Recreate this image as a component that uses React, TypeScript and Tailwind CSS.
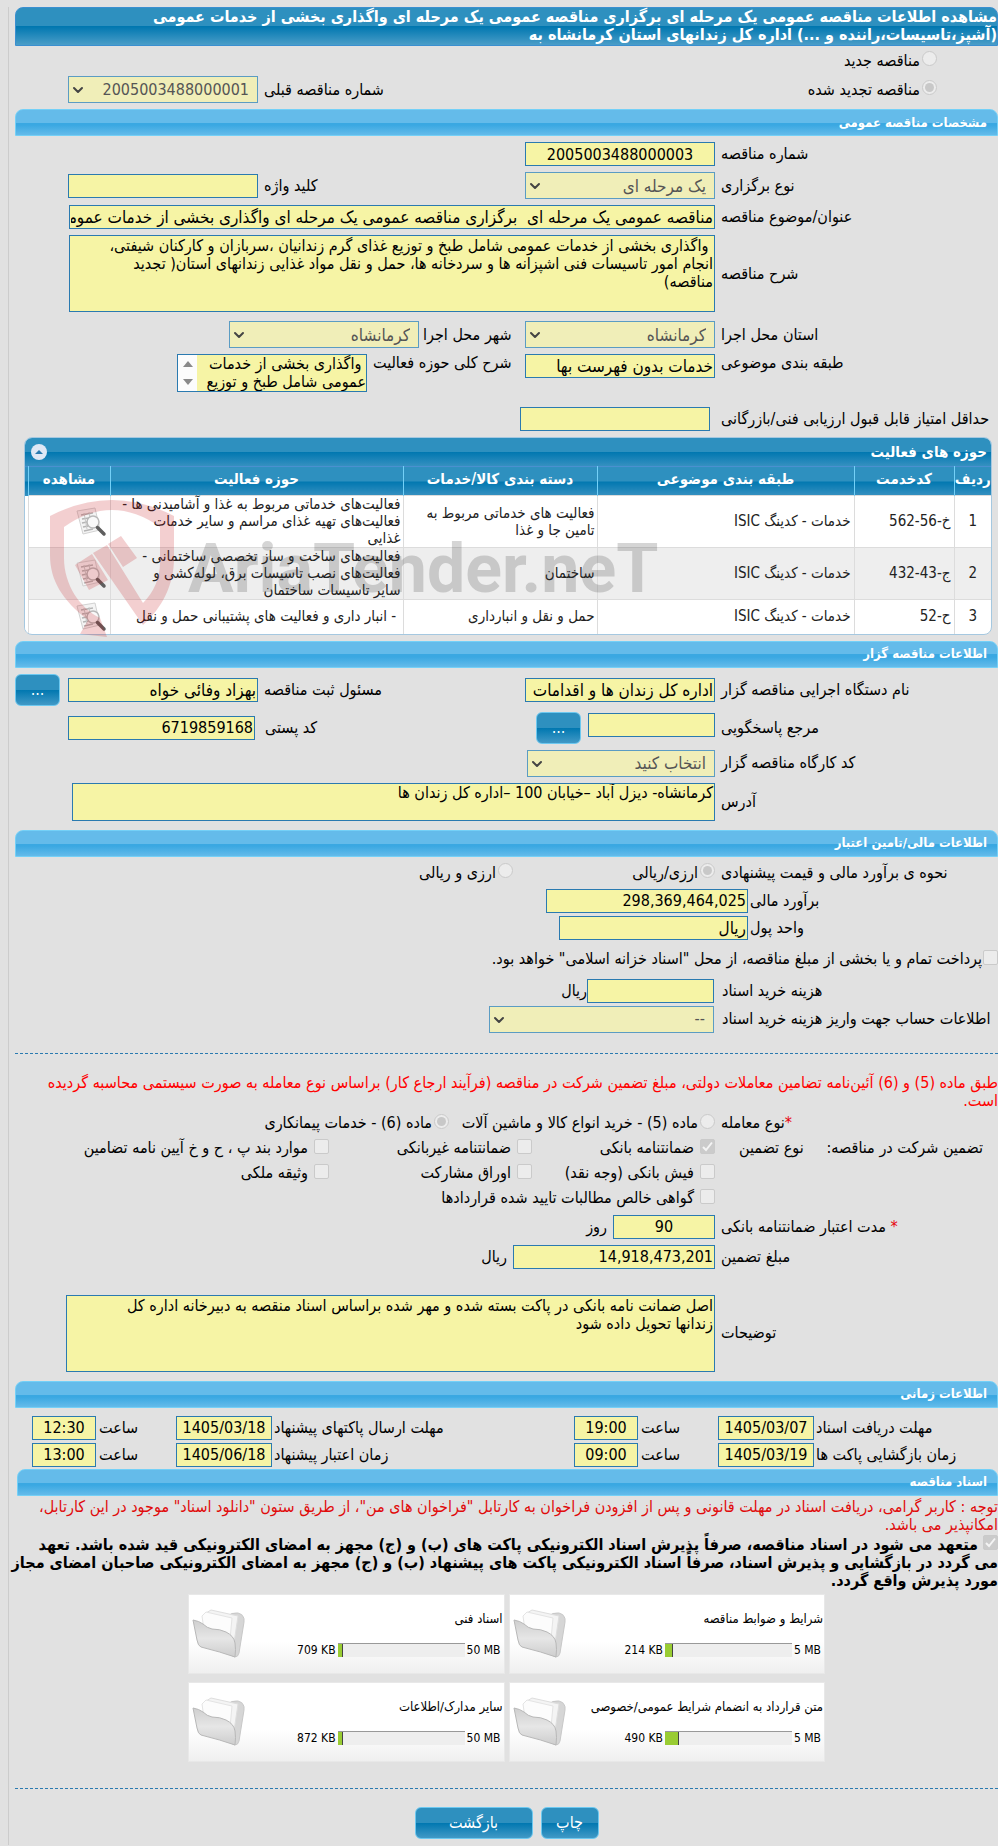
import type { ReactNode } from 'react'
import { clsx } from 'clsx'
import { ChevronDown } from 'lucide-react'

const fieldBase = 'border border-[#2a7ab0] bg-[#f6f4a5] text-black'

// Persian values are set a touch larger than numeric ones
const valueSize = (value?: string) => (value && /[\u0600-\u06ff]/.test(value) ? 'text-[17px]' : 'text-base')

const activities = [
  {
    code: 'خ-56-562',
    subject: 'خدمات - کدینگ ISIC',
    category: 'فعالیت های خدماتی مربوط به تامین جا و غذا',
    area: 'فعالیت‌های خدماتی مربوط به غذا و آشامیدنی ها -\nفعالیت‌های تهیه غذای مراسم و سایر خدمات\nغذایی',
  },
  {
    code: 'ج-43-432',
    subject: 'خدمات - کدینگ ISIC',
    category: 'ساختمان',
    area: 'فعالیت‌های ساخت و ساز تخصصی ساختمانی -\nفعالیت‌های نصب تاسیسات برق، لوله‌کشی و\nسایر تاسیسات ساختمان',
  },
  {
    code: 'ح-52',
    subject: 'خدمات - کدینگ ISIC',
    category: 'حمل و نقل و انبارداری',
    area: '\u00a0- انبار داری و فعالیت های پشتیبانی حمل و نقل',
  },
]

const documents = [
  { title: 'شرایط و ضوابط مناقصه', max: '5 MB', used: '214 KB', percent: 6 },
  { title: 'اسناد فنی', max: '50 MB', used: '709 KB', percent: 4 },
  { title: 'متن قرارداد به انضمام شرایط عمومی/خصوصی', max: '5 MB', used: '490 KB', percent: 11 },
  { title: 'سایر مدارک/اطلاعات', max: '50 MB', used: '872 KB', percent: 4 },
]

const schedule = [
  [
    { label: 'مهلت دریافت اسناد', date: '1405/03/07', hour: '19:00' },
    { label: 'مهلت ارسال پاکتهای پیشنهاد', date: '1405/03/18', hour: '12:30' },
  ],
  [
    { label: 'زمان بازگشایی پاکت ها', date: '1405/03/19', hour: '09:00' },
    { label: 'زمان اعتبار پیشنهاد', date: '1405/06/18', hour: '13:00' },
  ],
]

function SectionBar({ children, className }: { children: ReactNode; className?: string }) {
  return (
    <h2
      className={clsx(
        'flex h-[27px] items-center rounded-t-lg border border-[#74d0f7] bg-[linear-gradient(#64bbea_50%,#3aa8e2_50%,#3aa8e2_60%,#64bbea)] px-2.5 text-[13px] font-bold text-white',
        className,
      )}
    >
      {children}
    </h2>
  )
}

function Label({ htmlFor, children, className }: { htmlFor: string; children: ReactNode; className?: string }) {
  return (
    <label htmlFor={htmlFor} className={clsx('shrink-0 whitespace-nowrap text-left', className)}>
      {children}
    </label>
  )
}

function TextField({ id, value, className }: { id: string; value?: string; className?: string }) {
  return (
    <input
      id={id}
      type="text"
      readOnly
      defaultValue={value}
      className={clsx(fieldBase, valueSize(value), 'h-6 px-px leading-5', className)}
    />
  )
}

function SelectField({ id, value, className }: { id: string; value: string; className?: string }) {
  return (
    <div className={clsx('relative', className)}>
      <select
        id={id}
        disabled
        className={clsx(
          'h-[27px] w-full appearance-none border border-[#5b9cc3] bg-[#f0eeb8] pr-2 pl-6 leading-5 text-[#555]',
          valueSize(value),
        )}
      >
        <option>{value}</option>
      </select>
      <ChevronDown className="absolute top-1.5 left-0.5 size-4 text-[#444]" strokeWidth={3} />
    </div>
  )
}

function Choice({
  id,
  type,
  name,
  checked,
  children,
  className,
}: {
  id: string
  type: 'radio' | 'checkbox'
  name?: string
  checked?: boolean
  children: ReactNode
  className?: string
}) {
  return (
    <div className={clsx('flex shrink-0 items-center whitespace-nowrap', type === 'radio' ? 'gap-0.5' : 'gap-1.5', className)}>
      <Tick id={id} type={type} name={name} checked={checked} />
      <label htmlFor={id}>{children}</label>
    </div>
  )
}

function Tick({ id, type, name, checked }: { id: string; type: 'radio' | 'checkbox'; name?: string; checked?: boolean }) {
  return (
    <span className="relative mb-1 inline-flex size-[15px] shrink-0">
      <input
        id={id}
        type={type}
        name={name}
        disabled
        defaultChecked={checked}
        className={clsx(
          'peer size-full appearance-none border border-[#cacaca] bg-[#ececec]',
          type === 'radio' ? 'rounded-full' : 'rounded-xs checked:bg-[#cbcbcb]',
        )}
      />
      {type === 'radio' ? (
        <span className="absolute inset-[3px] hidden rounded-full bg-[#c8c8c8] peer-checked:block" />
      ) : (
        <svg viewBox="0 0 15 15" className="absolute inset-0 hidden peer-checked:block" fill="none" stroke="#f4f4f4" strokeWidth="2">
          <path d="M3 8l3 3 6-7.5" />
        </svg>
      )}
    </span>
  )
}

function BlueButton({ children, className, label }: { children: ReactNode; className?: string; label?: string }) {
  return (
    <button
      type="button"
      aria-label={label}
      className={clsx(
        'h-8 shrink-0 rounded-md border border-[#6cc8f0] bg-[linear-gradient(#2e90bf_50%,#0077b0_50%,#4199c6)] text-base text-white',
        className,
      )}
    >
      {children}
    </button>
  )
}

function ReportIcon() {
  return (
    <svg viewBox="0 0 32 32" className="size-8" fill="none">
      <path d="M2 5L20 2l5 22-17 4z" fill="#f4f4f4" stroke="#d2d2d2" />
      <path d="M6 9l12-2M7 13l7-1M7 17l5-1M8 21l5-1M9 25l9-2" stroke="#b5b5b5" strokeWidth="1.5" />
      <path d="M9 7l3 16M14 6l1 6" stroke="#c8c8c8" />
      <circle cx="18" cy="16" r="6" fill="#fafafa" fillOpacity=".8" stroke="#b9b9b9" strokeWidth="1.5" />
      <path d="M22.5 21.5L29 28" stroke="#5e5e5e" strokeWidth="3.5" strokeLinecap="round" />
    </svg>
  )
}

function FolderIcon() {
  return (
    <svg viewBox="0 0 54 50" className="h-[50px] w-[54px]">
      <defs>
        <linearGradient id="folder-front" x1="0" y1="0" x2="0" y2="1">
          <stop offset="0" stopColor="#cfcfcf" />
          <stop offset=".5" stopColor="#e6e6e6" />
          <stop offset="1" stopColor="#cdcdcd" />
        </linearGradient>
      </defs>
      <path d="M34 8q6-5 12-4 7 2 6 9l-5 31q-1 4-4 4L20 38z" fill="#d6d6d6" stroke="#c8c8c8" />
      <path d="M14 4l5-3 27 6-5 34-20-6z" fill="#f4f4f4" stroke="#dedede" />
      <path d="M10 7l4-4 26 6-3 32-23-6z" fill="#fcfcfc" stroke="#e4e4e4" />
      <path
        d="M1 11q6 1 10 4 4 4 9 5 8 0 14 3 8 4 9 11 1 6 0 14-14-5-34-10-3-1-4-7z"
        fill="url(#folder-front)"
        stroke="#b8b8b8"
        strokeLinejoin="round"
      />
    </svg>
  )
}

// Faint brand mark lying over the activity table
function Watermark() {
  return (
    <div dir="ltr" aria-hidden className="pointer-events-none absolute top-[63px] left-[26px] flex items-center opacity-20">
      <svg viewBox="0 0 126 138" className="h-[138px] w-[126px] shrink-0" fill="#c4161c">
        <path d="M0 16Q62-16 124 16V58C124 85 112 108 93 125L43 53 57 45 93 103C104 92 110 78 110 63V27Q62-7 14 27V58C14 85 30 108 50 118L57 137 30 134 38 120C12 100 0 80 0 55z" />
        <path d="M25 65L42 54 58 80 39 90zM58 44L71 36 87 58 73 67z" />
      </svg>
      <span className="ml-3 font-['Liberation_Sans_Narrow','Roboto',sans-serif] text-[68px] leading-none font-bold text-[#333]">
        AriaTender.neT
      </span>
    </div>
  )
}

function ActivityTable() {
  const head =
    'h-[29px] border-l border-[#74d0f7] bg-[linear-gradient(#2e90bf_50%,#0077b0_50%,#3590c0)] px-0 pt-0 pb-1 text-[15px] font-bold text-white'
  const cell = 'border-t border-l border-[#dcdcdc] py-0 whitespace-pre-line'
  return (
    <div className="relative mr-1.5 ml-[9px]">
      <div className="overflow-hidden rounded-lg border border-[#a5c8e0] bg-white">
        <div className="flex h-7 items-center justify-between bg-[linear-gradient(#2e90bf_50%,#0077b0_50%,#3590c0)] pr-1 pl-1.5 text-[15px] font-bold text-white">
          <h3>حوزه های فعالیت</h3>
          <button type="button" aria-label="بستن" className="flex size-4 items-center justify-center rounded-full bg-[#dfe8f5]">
            <svg viewBox="0 0 8 4" className="h-1 w-2" fill="#2a7ab0">
              <path d="M0 4l4-4 4 4z" />
            </svg>
          </button>
        </div>
        <table className="w-full table-fixed border-collapse border-t border-[#4a90d0] text-[15px] leading-[17px] text-[#222]">
          <colgroup>
            <col className="w-[37px]" />
            <col className="w-[100px]" />
            <col className="w-[257px]" />
            <col className="w-[194px]" />
            <col />
            <col className="w-[82px]" />
            <col className="w-[3px]" />
          </colgroup>
          <thead>
            <tr>
              <th className={head}>ردیف</th>
              <th className={head}>کدخدمت</th>
              <th className={head}>طبقه بندی موضوعی</th>
              <th className={head}>دسته بندی کالا/خدمات</th>
              <th className={head}>حوزه فعالیت</th>
              <th className={head}>مشاهده</th>
              <th className={clsx(head, 'border-l-0')} />
            </tr>
          </thead>
          <tbody>
            {activities.map((item, index) => (
              <tr key={item.code} className={clsx(index === 2 ? 'h-[34px]' : 'h-[52px]', index === 1 && 'bg-[#eee]')}>
                <td className={clsx(cell, 'px-1 text-center')}>{index + 1}</td>
                <td className={clsx(cell, 'px-[3px]')}>{item.code}</td>
                <td className={clsx(cell, 'px-[3px]')}>{item.subject}</td>
                <td className={clsx(cell, 'px-0.5')}>{item.category}</td>
                <td className={clsx(cell, 'px-0.5')}>{item.area}</td>
                <td className={clsx(cell, 'px-[3px]')}>
                  <button type="button" aria-label="مشاهده" className="block">
                    <ReportIcon />
                  </button>
                </td>
                <td className="bg-white p-0" />
              </tr>
            ))}
          </tbody>
        </table>
      </div>
      <Watermark />
    </div>
  )
}

function DocumentCard({ doc }: { doc: (typeof documents)[number] }) {
  return (
    <div className="flex h-20 items-center border border-[#e8e8e8] bg-[linear-gradient(#fff_60%,#efefef)]">
      <div className="flex min-w-0 flex-1 flex-col gap-3.5 pr-px text-xs">
        <a href="#" className="text-[13px] leading-[18px] whitespace-nowrap">
          {doc.title}
        </a>
        <div className="flex items-center gap-0.5 pr-0.5" dir="rtl">
          <span dir="ltr" className="whitespace-nowrap">
            {doc.max}
          </span>
          <div dir="ltr" className="flex h-3.5 w-[127px] border-t border-[#999] bg-[#eee]">
            <div className="border-r border-[#444] bg-[#9c3]" style={{ width: `${doc.percent}%` }} />
          </div>
          <span dir="ltr" className="whitespace-nowrap">
            {doc.used}
          </span>
        </div>
      </div>
      <div className="pl-[3px]">
        <FolderIcon />
      </div>
    </div>
  )
}

export default function App() {
  return (
    <div
      dir="rtl"
      lang="fa"
      className="min-h-screen overflow-hidden bg-[#e1e1e1] pt-[7px] pl-2 font-['DejaVu_Sans_Condensed','DejaVu_Sans',sans-serif] text-base leading-[18px] text-black"
    >
      <form className="border-l border-[#ccc] pb-1.5 pl-1.5">
        <h1 className="rounded-t-lg border border-[#3a8fd0] bg-[linear-gradient(#2e90bf_50%,#0077b0_50%,#4a9dc8)] pb-px text-base leading-[18px] font-bold whitespace-nowrap text-white">
          مشاهده اطلاعات مناقصه عمومی یک مرحله ای برگزاری مناقصه عمومی یک مرحله ای واگذاری بخشی از خدمات عمومی
          <br />
          (آشپز،تاسیسات،راننده و ...) اداره کل زندانهای استان کرمانشاه به
        </h1>

        <div className="mb-[5px] pr-[61px]">
          <div className="flex h-[29px] items-center">
            <Choice id="kind-new" type="radio" name="kind">
              مناقصه جدید
            </Choice>
          </div>
          <div className="flex h-[29px] items-center justify-between pl-[53px]">
            <Choice id="kind-renewed" type="radio" name="kind" checked>
              مناقصه تجدید شده
            </Choice>
            <div className="flex items-center gap-1.5">
              <Label htmlFor="previous">شماره مناقصه قبلی</Label>
              <SelectField id="previous" value="2005003488000001" className="w-[190px]" />
            </div>
          </div>
        </div>

        <SectionBar>مشخصات مناقصه عمومی</SectionBar>
        <div className="flex flex-col gap-1.5 py-1.5">
          <div className="flex items-center">
            <Label htmlFor="number" className="w-[283px] pl-1.5">
              شماره مناقصه
            </Label>
            <TextField id="number" value="2005003488000003" className="w-[190px] text-center" />
          </div>
          <div className="flex items-center">
            <Label htmlFor="method" className="w-[283px] pl-1.5">
              نوع برگزاری
            </Label>
            <SelectField id="method" value="یک مرحله ای" className="w-[190px]" />
            <Label htmlFor="keyword" className="mr-auto pl-1.5">
              کلید واژه
            </Label>
            <TextField id="keyword" className="ml-[53px] w-[190px]" />
          </div>
          <div className="flex items-center">
            <Label htmlFor="title" className="w-[283px] pl-1.5">
              عنوان/موضوع مناقصه
            </Label>
            <TextField
              id="title"
              value="مناقصه عمومی یک مرحله ای  برگزاری مناقصه عمومی یک مرحله ای واگذاری بخشی از خدمات عمومی"
              className="ml-[54px] min-w-0 flex-1"
            />
          </div>
          <div className="flex items-center">
            <Label htmlFor="description" className="w-[283px] pl-1.5">
              شرح مناقصه
            </Label>
            <textarea
              id="description"
              readOnly
              className={clsx(fieldBase, 'ml-[54px] h-[77px] min-w-0 flex-1 resize-none p-px')}
              defaultValue={
                ' واگذاری بخشی از خدمات عمومی شامل طبخ و توزیع غذای گرم زندانیان ،سربازان و کارکنان شیفتی،\nانجام امور تاسیسات فنی اشپزانه ها و سردخانه ها، حمل و نقل مواد غذایی زندانهای استان( تجدید\nمناقصه)'
              }
            />
          </div>
          <div className="mt-[3px] flex items-center">
            <Label htmlFor="province" className="w-[283px] pl-1.5">
              استان محل اجرا
            </Label>
            <SelectField id="province" value="کرمانشاه" className="w-[190px]" />
            <Label htmlFor="city" className="w-[106px] pl-1">
              شهر محل اجرا
            </Label>
            <SelectField id="city" value="کرمانشاه" className="w-[190px]" />
          </div>
          <div className="flex items-start">
            <Label htmlFor="subject" className="w-[283px] pl-1.5">
              طبقه بندی موضوعی
            </Label>
            <TextField id="subject" value="خدمات بدون فهرست بها" className="w-[190px]" />
            <Label htmlFor="scope" className="w-[158px] pl-1.5">
              شرح کلی حوزه فعالیت
            </Label>
            <div className={clsx(fieldBase, 'flex h-[38px] w-[190px]')}>
              <textarea
                id="scope"
                readOnly
                className="min-w-0 flex-1 resize-none overflow-hidden"
                defaultValue={' واگذاری بخشی از خدمات\nعمومی شامل طبخ و توزیع'}
              />
              <div className="flex w-[19px] flex-col items-center justify-between bg-[#fcfcfc] py-1.5">
                <svg viewBox="0 0 10 6" className="h-1.5 w-2.5" fill="#8a8a8a">
                  <path d="M0 6l5-6 5 6z" />
                </svg>
                <svg viewBox="0 0 10 6" className="h-1.5 w-2.5" fill="#8a8a8a">
                  <path d="M0 0l5 6 5-6z" />
                </svg>
              </div>
            </div>
          </div>
          <div className="mt-[9px] flex items-center">
            <Label htmlFor="min-score" className="w-[288px] pl-[11px]">
              حداقل امتیاز قابل قبول ارزیابی فنی/بازرگانی
            </Label>
            <TextField id="min-score" className="w-[190px]" />
          </div>
          <ActivityTable />
        </div>

        <SectionBar>اطلاعات مناقصه گزار</SectionBar>
        <div className="flex flex-col gap-1.5 pt-1.5 pb-[9px]">
          <div className="flex items-center">
            <Label htmlFor="agency" className="w-[283px] pl-1.5">
              نام دستگاه اجرایی مناقصه گزار
            </Label>
            <TextField id="agency" value="اداره کل زندان ها و اقدامات" className="w-[190px]" />
            <Label htmlFor="registrar" className="mr-auto pl-1.5">
              مسئول ثبت مناقصه
            </Label>
            <TextField id="registrar" value="بهزاد وفائی خواه" className="w-[190px]" />
            <BlueButton className="mr-2 w-[45px]" label="انتخاب مسئول">
              ...
            </BlueButton>
          </div>
          <div className="flex items-center">
            <Label htmlFor="contact" className="w-[283px] pl-1.5">
              مرجع پاسخگویی
            </Label>
            <TextField id="contact" className="mb-1.5 w-[127px]" />
            <BlueButton className="mr-[7px] w-[45px]" label="انتخاب مرجع">
              ...
            </BlueButton>
            <Label htmlFor="postal" className="mr-auto pl-2.5">
              کد پستی
            </Label>
            <TextField id="postal" value="6719859168" className="ml-[53px] w-[187px]" />
          </div>
          <div className="flex items-center">
            <Label htmlFor="workshop" className="w-[283px] pl-1.5">
              کد کارگاه مناقصه گزار
            </Label>
            <SelectField id="workshop" value="انتخاب کنید" className="w-[188px]" />
          </div>
          <div className="flex items-center">
            <Label htmlFor="address" className="w-[283px] pl-1.5">
              آدرس
            </Label>
            <textarea
              id="address"
              readOnly
              className={clsx(fieldBase, 'ml-[57px] h-[38px] min-w-0 flex-1 resize-none px-px')}
              defaultValue="کرمانشاه- دیزل آباد –خیابان 100 –اداره کل زندان ها"
            />
          </div>
        </div>

        <SectionBar>اطلاعات مالی/تامین اعتبار</SectionBar>
        <div className="flex h-8 items-center">
          <span className="w-[283px] shrink-0 pl-1.5 text-left whitespace-nowrap">نحوه ی برآورد مالی و قیمت پیشنهادی</span>
          <Choice id="currency-one" type="radio" name="currency" checked className="w-[202px]">
            ارزی/ریالی
          </Choice>
          <Choice id="currency-both" type="radio" name="currency">
            ارزی و ریالی
          </Choice>
        </div>
        <div className="flex flex-col gap-[3px]">
          <div className="flex items-center">
            <Label htmlFor="estimate" className="w-[250px] pl-0.5">
              برآورد مالی
            </Label>
            <TextField id="estimate" value="298,369,464,025" className="w-[202px]" />
          </div>
          <div className="flex items-center">
            <Label htmlFor="unit" className="w-[250px] pl-0.5">
              واحد پول
            </Label>
            <TextField id="unit" value="ریال" className="w-[189px]" />
          </div>
        </div>
        <div className="flex h-[39px] items-center">
          <Choice id="treasury" type="checkbox" className="gap-px">
            پرداخت تمام و یا بخشی از مبلغ مناقصه، از محل "اسناد خزانه اسلامی" خواهد بود.
          </Choice>
        </div>
        <div className="flex flex-col gap-[3px]">
          <div className="flex items-center">
            <Label htmlFor="fee" className="w-[284px] pl-2">
              هزینه خرید اسناد
            </Label>
            <TextField id="fee" className="w-[127px]" />
            <span>ریال</span>
          </div>
          <div className="flex items-center">
            <Label htmlFor="account" className="w-[284px] pl-2">
              اطلاعات حساب جهت واریز هزینه خرید اسناد
            </Label>
            <SelectField id="account" value="--" className="w-[225px]" />
          </div>
        </div>

        <hr className="my-5 border-dashed border-[#2a7ab0]" />

        <p className="text-[#f00]">
          طبق ماده (5) و (6) آئین‌نامه تضامین معاملات دولتی، مبلغ تضمین شرکت در مناقصه (فرآیند ارجاع کار) براساس نوع معامله به صورت
          سیستمی محاسبه گردیده
          <br />
          است.
        </p>
        <div className="mt-px flex h-[25px] items-center">
          <span className="w-[283px] shrink-0 pl-1.5 text-left">
            <span className="text-red-600">*</span>نوع معامله
          </span>
          <Choice id="article-5" type="radio" name="article" className="w-[266px]">
            ماده (5) - خرید انواع کالا و ماشین آلات
          </Choice>
          <Choice id="article-6" type="radio" name="article" checked>
            ماده (6) - خدمات پیمانکاری
          </Choice>
        </div>
        <div className="flex h-[25px] items-center">
          <div className="flex w-[283px] shrink-0 justify-between pr-[15px] pl-6">
            <span>تضمین شرکت در مناقصه:</span>
            <span>نوع تضمین</span>
          </div>
          <Choice id="g-bank" type="checkbox" checked className="w-[183px]">
            ضمانتنامه بانکی
          </Choice>
          <Choice id="g-nonbank" type="checkbox" className="w-[203px]">
            ضمانتنامه غیربانکی
          </Choice>
          <Choice id="g-clauses" type="checkbox">
            موارد بند پ ، ح و خ آیین نامه تضامین
          </Choice>
        </div>
        <div className="flex h-[25px] items-center pr-[283px]">
          <Choice id="g-cash" type="checkbox" className="w-[183px]">
            فیش بانکی (وجه نقد)
          </Choice>
          <Choice id="g-bonds" type="checkbox" className="w-[203px]">
            اوراق مشارکت
          </Choice>
          <Choice id="g-property" type="checkbox">
            وثیقه ملکی
          </Choice>
        </div>
        <div className="flex h-[25px] items-center pr-[283px]">
          <Choice id="g-claims" type="checkbox">
            گواهی خالص مطالبات تایید شده قراردادها
          </Choice>
        </div>
        <div className="mt-1 flex flex-col gap-1.5">
          <div className="flex items-center">
            <Label htmlFor="validity" className="w-[283px] pl-1.5">
              <span className="text-red-600">*</span> مدت اعتبار ضمانتنامه بانکی
            </Label>
            <TextField id="validity" value="90" className="w-[102px] text-center" />
            <span className="pr-1.5">روز</span>
          </div>
          <div className="flex items-center">
            <Label htmlFor="amount" className="w-[283px] pl-1.5">
              مبلغ تضمین
            </Label>
            <TextField id="amount" value="14,918,473,201" className="w-[202px]" />
            <span className="pr-1.5">ریال</span>
          </div>
        </div>
        <div className="mt-[26px] mb-[9px] flex items-center">
          <Label htmlFor="notes" className="w-[283px] pl-1.5">
            توضیحات
          </Label>
          <textarea
            id="notes"
            readOnly
            className={clsx(fieldBase, 'ml-[51px] h-[77px] min-w-0 flex-1 resize-none p-px')}
            defaultValue={
              'اصل ضمانت نامه بانکی در پاکت بسته شده و مهر شده براساس اسناد منقصه به دبیرخانه اداره کل\nزندانها تحویل داده شود'
            }
          />
        </div>

        <SectionBar>اطلاعات زمانی</SectionBar>
        <div className="mt-2 mb-0.5 flex flex-col gap-[3px] pl-[17px]">
          {schedule.map((row, r) => (
            <div key={r} className="flex items-center">
              {row.map((slot, s) => (
                <div key={slot.label} className={clsx('flex items-center', s === 1 && 'flex-1')}>
                  <Label htmlFor={`date-${r}-${s}`} className={clsx('pl-0.5', s === 0 ? 'w-[184px]' : 'flex-1')}>
                    {slot.label}
                  </Label>
                  <TextField id={`date-${r}-${s}`} value={slot.date} className="w-24 text-center" />
                  <Label htmlFor={`hour-${r}-${s}`} className="w-20 pl-[3px]">
                    ساعت
                  </Label>
                  <TextField id={`hour-${r}-${s}`} value={slot.hour} className="w-16 text-center" />
                </div>
              ))}
            </div>
          ))}
        </div>

        <SectionBar className="ml-0.5">اسناد مناقصه</SectionBar>
        <p className="mt-0.5 text-[#e00b0b]">
          توجه : کاربر گرامی، دریافت اسناد در مهلت قانونی و پس از افزودن فراخوان به کارتابل "فراخوان های من"، از طریق ستون "دانلود
          اسناد" موجود در این کارتابل،
          <br />
          امکانپذیر می باشد.
        </p>
        <div className="mt-px mb-1 font-bold whitespace-nowrap">
          <Tick id="pledge" type="checkbox" checked />
          <label htmlFor="pledge">
            {' '}
            متعهد می شود در اسناد مناقصه، صرفاً پذیرش اسناد الکترونیکی پاکت های (ب) و (ج) مجهز به امضای الکترونیکی قید شده باشد. تعهد
            <br />
            می گردد در بازگشایی و پذیرش اسناد، صرفاً اسناد الکترونیکی پاکت های پیشنهاد (ب) و (ج) مجهز به امضای الکترونیکی صاحبان امضای
            مجاز
            <br />
            مورد پذیرش واقع گردد.
          </label>
        </div>

        <div className="mx-auto grid w-[637px] grid-cols-2 gap-x-1 gap-y-2">
          {documents.map((doc) => (
            <DocumentCard key={doc.title} doc={doc} />
          ))}
        </div>

        <hr className="mt-[26px] mb-[18px] border-dashed border-[#2a7ab0]" />

        <div className="flex justify-center gap-2">
          <BlueButton className="w-[58px]">چاپ</BlueButton>
          <BlueButton className="w-[118px]">بازگشت</BlueButton>
        </div>
      </form>
    </div>
  )
}
